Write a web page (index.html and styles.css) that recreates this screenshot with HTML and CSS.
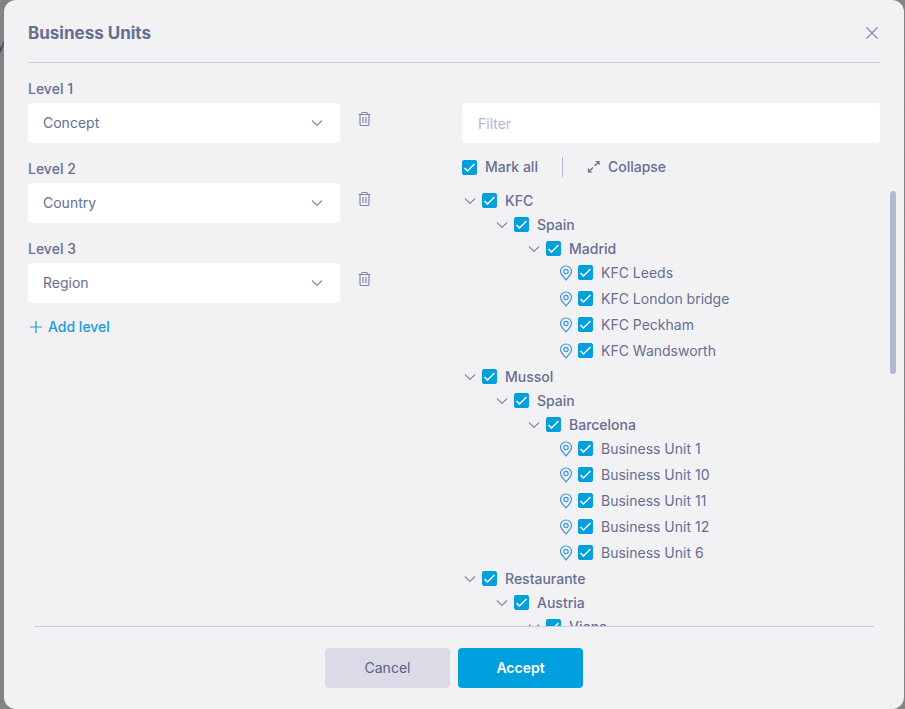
FILE: index.html
```html
<!DOCTYPE html>
<html lang="en">
<head>
    <meta charset="UTF-8">
    <meta name="viewport" content="width=device-width, initial-scale=1">
    <title>Business Units</title>
    <link rel="stylesheet" href="styles.css">
</head>
<body>
    <svg class="sprite" aria-hidden="true">
        <symbol id="chevron" viewBox="0 0 16 16"><path d="M3 5.500L8 10.500L13 5.500"/></symbol>
        <symbol id="pin" viewBox="0 0 16 16"><path d="M8 15C6 12.500 2.500 9.500 2.500 6.500a5.500 5.500 0 0 1 11 0C13.500 9.500 10 12.500 8 15z"/><circle cx="8" cy="6.500" r="2.200"/></symbol>
        <symbol id="trash" viewBox="0 0 16 16"><path d="M2.500 3.500h12M5 3.500Q5.500 1.500 7 1.500h3q1.500 0 2 2M4 3.500v9.500q0 1.500 1.500 1.500h6q1.500 0 1.500-1.500V3.500M7 6v6M10 6v6"/></symbol>
    </svg>

    <div class="page-behind"><span>y</span></div>

    <div class="modal" role="dialog" aria-labelledby="modal-title">
        <header class="modal-header">
            <h1 id="modal-title">Business Units</h1>
            <button type="button" class="icon-btn" aria-label="Close">
                <svg class="icon" viewBox="0 0 16 16"><path d="M2.500 2.500l11 11M13.500 2.500l-11 11"/></svg>
            </button>
        </header>

        <div class="modal-body">
            <section class="levels">
                <div class="field">
                    <label for="level1">Level 1</label>
                    <div class="field-row">
                        <select id="level1"><option>Concept</option></select>
                        <button type="button" class="icon-btn" aria-label="Delete level 1"><svg class="icon"><use href="#trash"/></svg></button>
                    </div>
                </div>
                <div class="field">
                    <label for="level2">Level 2</label>
                    <div class="field-row">
                        <select id="level2"><option>Country</option></select>
                        <button type="button" class="icon-btn" aria-label="Delete level 2"><svg class="icon"><use href="#trash"/></svg></button>
                    </div>
                </div>
                <div class="field">
                    <label for="level3">Level 3</label>
                    <div class="field-row">
                        <select id="level3"><option>Region</option></select>
                        <button type="button" class="icon-btn" aria-label="Delete level 3"><svg class="icon"><use href="#trash"/></svg></button>
                    </div>
                </div>
                <button type="button" class="add-level">
                    <svg class="icon" viewBox="0 0 16 16"><path d="M8 2v12M2 8h12"/></svg>
                    Add level
                </button>
            </section>

            <section class="units">
                <input type="text" class="filter" placeholder="Filter" aria-label="Filter">
                <div class="toolbar">
                    <label><input type="checkbox" checked>Mark all</label>
                    <button type="button" class="collapse">
                        <svg class="icon" viewBox="0 0 16 16"><path d="M2.500 13l4.500-4.500M8.500 7l4.500-4.500M9.500 2.500h3.500v3.500M2.500 9.500v3.500h3.500"/></svg>
                        Collapse
                    </button>
                </div>
                <div class="tree-wrap">
                    <ul class="tree">
                        <li>
                            <div class="node"><svg class="icon"><use href="#chevron"/></svg><label><input type="checkbox" checked>KFC</label></div>
                            <ul>
                                <li>
                                    <div class="node"><svg class="icon"><use href="#chevron"/></svg><label><input type="checkbox" checked>Spain</label></div>
                                    <ul>
                                        <li>
                                            <div class="node"><svg class="icon"><use href="#chevron"/></svg><label><input type="checkbox" checked>Madrid</label></div>
                                            <ul>
                                                <li class="node leaf"><svg class="icon"><use href="#pin"/></svg><label><input type="checkbox" checked>KFC Leeds</label></li>
                                                <li class="node leaf"><svg class="icon"><use href="#pin"/></svg><label><input type="checkbox" checked>KFC London bridge</label></li>
                                                <li class="node leaf"><svg class="icon"><use href="#pin"/></svg><label><input type="checkbox" checked>KFC Peckham</label></li>
                                                <li class="node leaf"><svg class="icon"><use href="#pin"/></svg><label><input type="checkbox" checked>KFC Wandsworth</label></li>
                                            </ul>
                                        </li>
                                    </ul>
                                </li>
                            </ul>
                        </li>
                        <li>
                            <div class="node"><svg class="icon"><use href="#chevron"/></svg><label><input type="checkbox" checked>Mussol</label></div>
                            <ul>
                                <li>
                                    <div class="node"><svg class="icon"><use href="#chevron"/></svg><label><input type="checkbox" checked>Spain</label></div>
                                    <ul>
                                        <li>
                                            <div class="node"><svg class="icon"><use href="#chevron"/></svg><label><input type="checkbox" checked>Barcelona</label></div>
                                            <ul>
                                                <li class="node leaf"><svg class="icon"><use href="#pin"/></svg><label><input type="checkbox" checked>Business Unit 1</label></li>
                                                <li class="node leaf"><svg class="icon"><use href="#pin"/></svg><label><input type="checkbox" checked>Business Unit 10</label></li>
                                                <li class="node leaf"><svg class="icon"><use href="#pin"/></svg><label><input type="checkbox" checked>Business Unit 11</label></li>
                                                <li class="node leaf"><svg class="icon"><use href="#pin"/></svg><label><input type="checkbox" checked>Business Unit 12</label></li>
                                                <li class="node leaf"><svg class="icon"><use href="#pin"/></svg><label><input type="checkbox" checked>Business Unit 6</label></li>
                                            </ul>
                                        </li>
                                    </ul>
                                </li>
                            </ul>
                        </li>
                        <li>
                            <div class="node"><svg class="icon"><use href="#chevron"/></svg><label><input type="checkbox" checked>Restaurante</label></div>
                            <ul>
                                <li>
                                    <div class="node"><svg class="icon"><use href="#chevron"/></svg><label><input type="checkbox" checked>Austria</label></div>
                                    <ul>
                                        <li>
                                            <div class="node"><svg class="icon"><use href="#chevron"/></svg><label><input type="checkbox" checked>Viena</label></div>
                                        </li>
                                    </ul>
                                </li>
                            </ul>
                        </li>
                    </ul>
                    <div class="scroll-thumb"></div>
                </div>
            </section>
        </div>

        <footer class="modal-footer">
            <button type="button" class="btn btn-cancel">Cancel</button>
            <button type="button" class="btn btn-accept">Accept</button>
        </footer>
    </div>
</body>
</html>
```
FILE: styles.css
```css
* {
    box-sizing: border-box;
}

body {
    margin: 0;
    background: #838585;
    color: #666e92;
    font-family: Inter, sans-serif;
    font-size: 14px;
    line-height: 20px;
}

button, input, select {
    font: inherit;
    color: inherit;
}

button {
    padding: 0;
    border: 0;
    background: none;
    cursor: pointer;
}

ul {
    list-style: none;
    margin: 0;
    padding: 0;
}

.sprite {
    position: absolute;
    width: 0;
    height: 0;
}

.icon {
    display: block;
    flex: none;
    width: 16px;
    height: 16px;
    fill: none;
    stroke: currentColor;
    stroke-width: 1.2;
}

/* table rows of the page under the dialog */
.page-behind {
    position: absolute;
    inset: 0;
    overflow: hidden;
    padding-top: 35px;
    color: #3d4657;
    background: repeating-linear-gradient(#838585 0 3px, #7b7d7e 3px 4px, #838585 4px 52px);
}

.page-behind span {
    margin-left: -3px;
}

.modal {
    position: relative;
    display: flex;
    flex-direction: column;
    height: 100vh;
    margin: 0 1px 0 4px;
    padding: 0 24px;
    border-radius: 12px;
    background: #f2f2f5;
}

.modal-header {
    display: flex;
    align-items: center;
    justify-content: space-between;
    padding: 20px 0 16px;
    height: 63px;
    border-bottom: 1px solid #cccde0;
}

.modal-header h1 {
    margin: 0;
    font-size: 17px;
    font-weight: 700;
    line-height: 26px;
}

.icon-btn {
    color: #8087b5;
}

.modal-body {
    display: grid;
    grid-template-columns: 1fr 1fr;
    grid-template-rows: minmax(0, 1fr);
    gap: 16px;
    flex: 1;
    min-height: 0;
    padding-top: 16px;
}

.field {
    margin-bottom: 16px;
}

.field:last-of-type {
    margin-bottom: 14px;
}

.field > label {
    display: block;
    margin-bottom: 4px;
    font-weight: 500;
}

.field-row {
    display: flex;
    align-items: flex-start;
    gap: 16px;
}

.field-row .icon-btn {
    padding-top: 8px;
}

select {
    appearance: none;
    flex: 0 1 312px;
    height: 40px;
    padding: 0 40px 0 15px;
    border: 0;
    border-radius: 4px;
    background: #fff url("data:image/svg+xml,%3Csvg xmlns='http://www.w3.org/2000/svg' width='16' height='16' fill='none' stroke='%238087b5' stroke-width='1.2'%3E%3Cpath d='M3 5.500L8 10.500L13 5.500'/%3E%3C/svg%3E") no-repeat right 15px center;
}

.add-level {
    display: flex;
    align-items: center;
    gap: 4px;
    color: #1a9bdc;
    font-weight: 500;
}

.units {
    display: flex;
    flex-direction: column;
    gap: 14px;
    padding-top: 24px;
    min-height: 0;
}

.filter {
    flex: none;
    width: 100%;
    height: 40px;
    padding: 0 16px;
    border: 0;
    border-radius: 4px;
    background: #fff;
}

.filter::placeholder {
    color: #b3b8d3;
}

.toolbar {
    display: flex;
    font-weight: 500;
}

.toolbar label, .node label {
    display: flex;
    align-items: center;
    gap: 8px;
}

.collapse {
    display: flex;
    align-items: center;
    gap: 6px;
    margin-left: 24px;
    padding-left: 23px;
    border-left: 1px solid #b3b8d3;
    font-weight: 500;
}

input[type="checkbox"] {
    appearance: none;
    flex: none;
    width: 15px;
    height: 15px;
    margin: 0;
    border: 1px solid #00a0df;
    border-radius: 2px;
    background: #fff;
}

input[type="checkbox"]:checked {
    background: #00a0df url("data:image/svg+xml,%3Csvg xmlns='http://www.w3.org/2000/svg' width='13' height='13' fill='none' stroke='white' stroke-width='1.500'%3E%3Cpath d='M1.500 7L4.500 10L11.500 3'/%3E%3C/svg%3E") no-repeat center;
}

.tree-wrap {
    position: relative;
    flex: 1;
    min-height: 0;
}

.tree {
    height: 100%;
    overflow-y: auto;
    scrollbar-width: none;
    font-weight: 500;
}

.tree ul {
    padding-left: 32px;
}

.node {
    display: flex;
    align-items: center;
    gap: 4px;
    height: 19px;
    margin-bottom: 5px;
}

.node .icon {
    color: #8087a8;
}

.leaf {
    margin-bottom: 7px;
    font-weight: 400;
}

.leaf .icon {
    color: #3a97dc;
}

.scroll-thumb {
    position: absolute;
    top: 0;
    right: -16px;
    width: 6px;
    height: 42%;
    border-radius: 3px;
    background: #b3b8d3;
}

.modal-footer {
    display: flex;
    justify-content: center;
    gap: 8px;
    margin: 0 6px;
    padding: 21px 0;
    border-top: 1px solid #cccde0;
}

.btn {
    width: 125px;
    height: 40px;
    border-radius: 4px;
}

.btn-cancel {
    background: #dbdbe7;
    color: #586282;
}

.btn-accept {
    background: #00a0df;
    color: #fff;
    font-weight: 600;
}
```
